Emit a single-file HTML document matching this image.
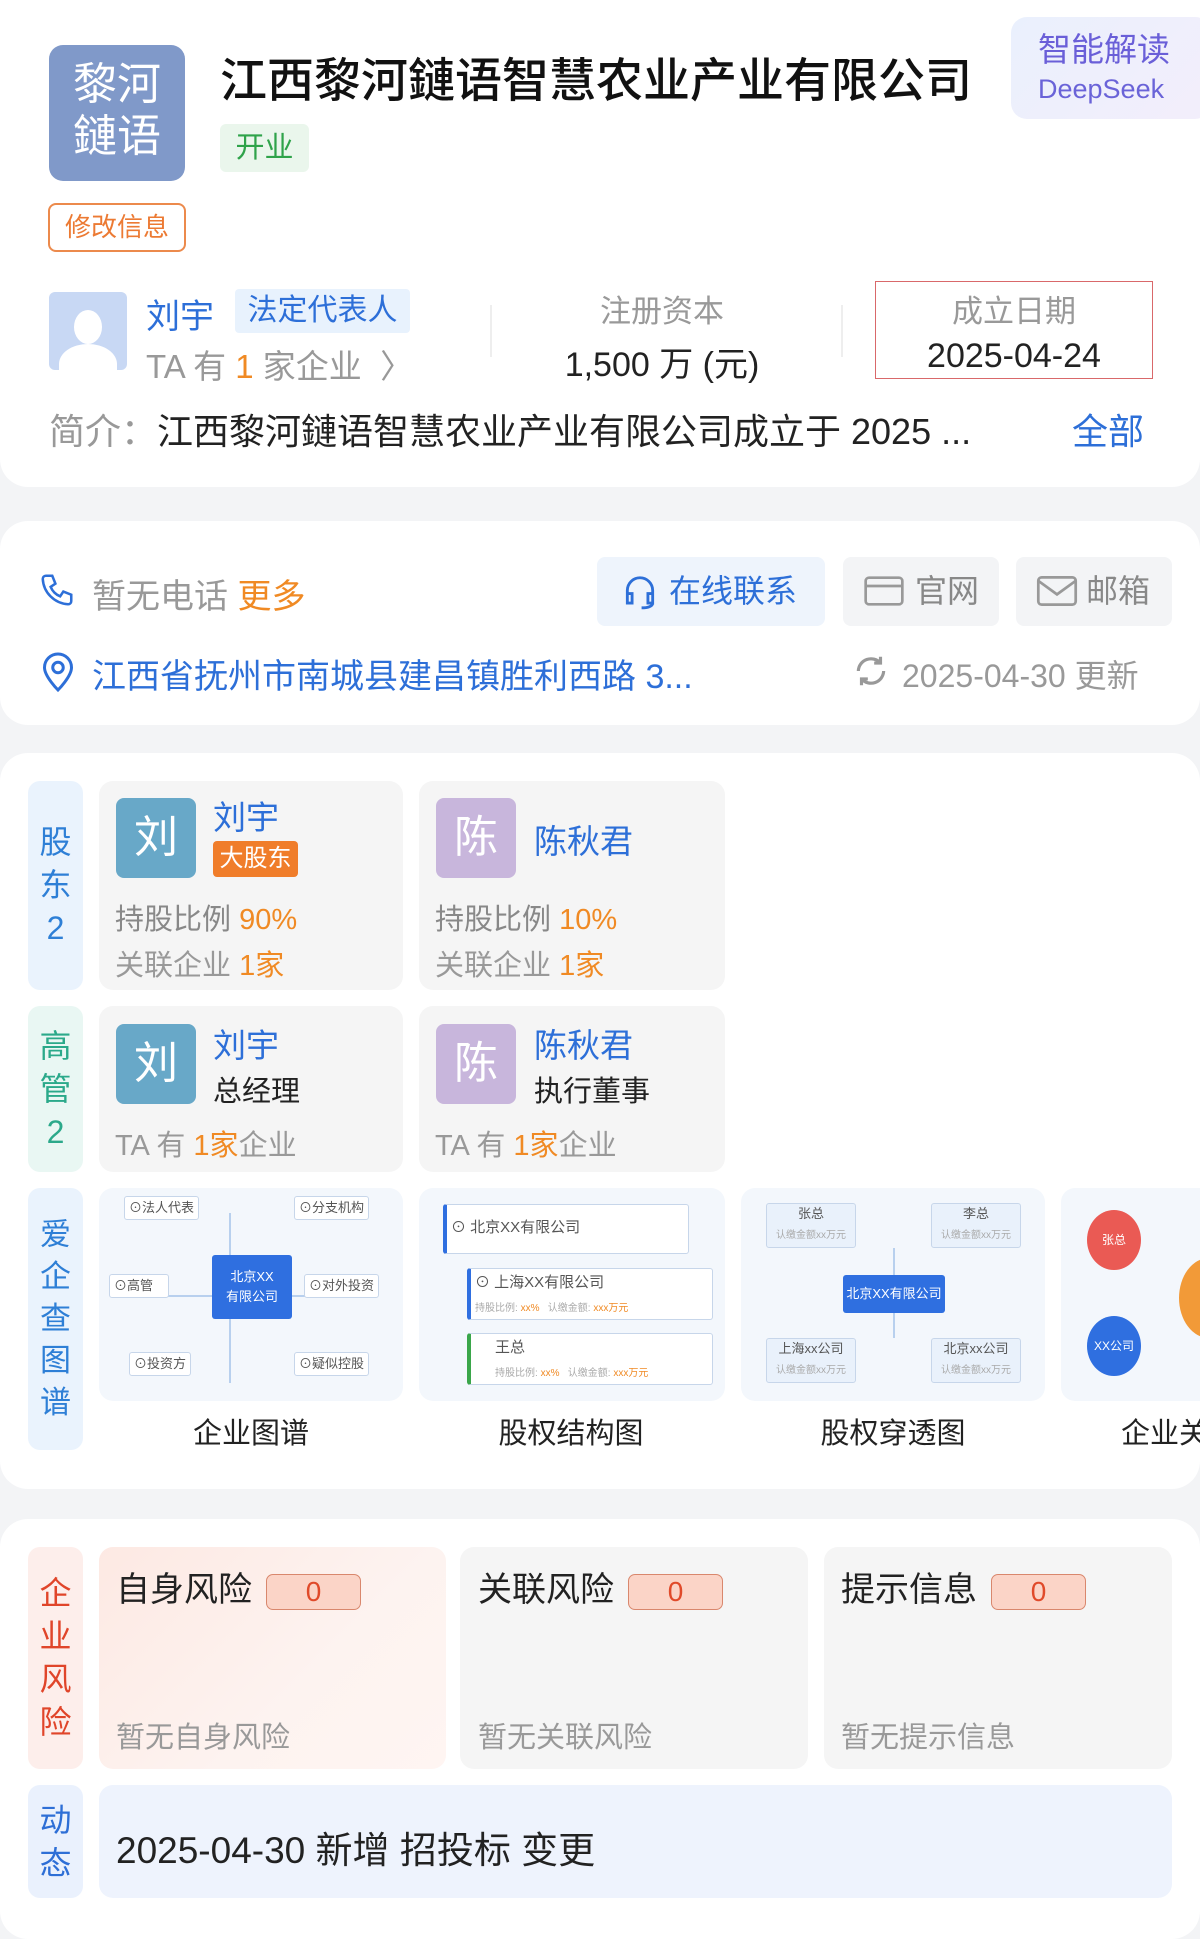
<!DOCTYPE html>
<html><head><meta charset="utf-8"><style>
*{margin:0;padding:0;box-sizing:border-box}
body{width:1200px;height:1911px;background:#f3f4f6;font-family:"Liberation Sans","Noto Sans CJK SC",sans-serif;position:relative;overflow:hidden;color:#222}
.a{position:absolute;white-space:nowrap}
.card{position:absolute;left:0;width:1200px;background:#fff;border-radius:28px}
.gray{color:#999}.blue{color:#2d6fd8}.or{color:#f08a24}
.side{position:absolute;left:28px;width:55px;border-radius:12px;background:#eaf3fd;color:#2e7fd6;font-size:32px;text-align:center;line-height:43px;display:flex;flex-direction:column;justify-content:center}
.box{position:absolute;background:#f5f5f5;border-radius:14px}
.av{position:absolute;width:80px;height:80px;border-radius:8px;color:#fff;font-size:44px;text-align:center;line-height:80px}
.th{position:absolute;top:1188px;height:213px;background:#f3f7fc;border-radius:14px;overflow:hidden}
.n{position:absolute;background:#fff;border:1.5px solid #c7d6ea;border-radius:3px;font-size:13px;color:#555;white-space:nowrap;line-height:22px;padding:0 4px}
.bl{position:absolute;background:#2f6fe0;color:#fff;font-size:13px;text-align:center;border-radius:3px}
.lb{position:absolute;top:1410px;font-size:29px;color:#222;width:304px;text-align:center}
.zero{display:inline-block;width:95px;height:36px;border:1.5px solid #d9876d;background:#fbd4c7;border-radius:7px;color:#e04a2a;font-size:28px;text-align:center;line-height:33px;vertical-align:middle;margin-left:14px}
</style></head><body>

<div class="card" style="top:-30px;height:517px"></div>
<div class="a" style="left:49px;top:45px;width:136px;height:136px;background:#8099c9;border-radius:14px;color:#fff;font-size:44px;line-height:52px;text-align:center;padding-top:14px">黎河<br>鏈语</div>
<div class="a" style="left:220px;top:42px;font-size:47px;font-weight:500;color:#111">江西黎河鏈语智慧农业产业有限公司</div>
<div class="a" style="left:1011px;top:17px;width:200px;height:102px;background:linear-gradient(135deg,#eaf0fd,#f3eefb);border-radius:16px"></div>
<div class="a" style="left:1038px;top:30px;font-size:33px;color:#6a5fd8;line-height:40px">智能解读</div>
<div class="a" style="left:1038px;top:74px;font-size:27px;color:#6a63d8">DeepSeek</div>
<div class="a" style="left:220px;top:124px;width:89px;height:48px;background:#eaf6ec;border-radius:6px;color:#2fa34a;font-size:29px;text-align:center;line-height:48px">开业</div>
<div class="a" style="left:48px;top:203px;width:138px;height:49px;border:2px solid #ec8a4c;border-radius:8px;color:#ec7a33;font-size:26px;text-align:center;line-height:45px">修改信息</div>

<div class="a" style="left:49px;top:292px;width:78px;height:78px;background:#c8d8f4;border-radius:6px;overflow:hidden">
<div style="position:absolute;left:25px;top:18px;width:28px;height:34px;border-radius:50%;background:#fff"></div>
<div style="position:absolute;left:10px;top:52px;width:58px;height:40px;border-radius:50% 50% 0 0;background:#fff"></div></div>
<div class="a blue" style="left:146px;top:289px;font-size:34px">刘宇</div>
<div class="a" style="left:235px;top:289px;width:175px;height:44px;background:#e8f2fd;border-radius:4px;color:#2d6fd8;font-size:30px;text-align:center;line-height:44px">法定代表人</div>
<div class="a gray" style="left:146px;top:340px;font-size:33px">TA 有 <span class="or">1</span> 家企业 &nbsp;〉</div>
<div class="a" style="left:490px;top:305px;width:2px;height:52px;background:#eee"></div>
<div class="a" style="left:841px;top:305px;width:2px;height:52px;background:#eee"></div>
<div class="a gray" style="left:562px;top:286px;width:200px;text-align:center;font-size:31px">注册资本</div>
<div class="a" style="left:542px;top:337px;width:240px;text-align:center;font-size:34px">1,500 万 (元)</div>
<div class="a" style="left:875px;top:281px;width:278px;height:98px;border:1.5px solid #d9686a"></div>
<div class="a gray" style="left:875px;top:286px;width:278px;text-align:center;font-size:31px">成立日期</div>
<div class="a" style="left:875px;top:337px;width:278px;text-align:center;font-size:34px">2025-04-24</div>
<div class="a" style="left:49px;top:403px;font-size:36px"><span class="gray">简介：</span>江西黎河鏈语智慧农业产业有限公司成立于 2025 ...</div>
<div class="a blue" style="left:1072px;top:403px;font-size:36px">全部</div>

<div class="card" style="top:521px;height:204px"></div>
<svg class="a" style="left:38px;top:570px" width="38" height="40" viewBox="0 0 24 24" fill="none" stroke="#2d6fd8" stroke-width="1.6"><path d="M5 3h4l2 5-3 2a11 11 0 0 0 6 6l2-3 5 2v4a2 2 0 0 1-2 2A17 17 0 0 1 3 5a2 2 0 0 1 2-2z"/></svg>
<div class="a gray" style="left:92px;top:569px;font-size:34px">暂无电话 <span class="or">更多</span></div>
<div class="a" style="left:597px;top:557px;width:228px;height:69px;background:#eef4fc;border-radius:8px;color:#2d6fd8;font-size:32px;line-height:69px;padding-left:72px">在线联系</div>
<svg class="a" style="left:620px;top:573px" width="40" height="38" viewBox="0 0 24 24" fill="none" stroke="#2d6fd8" stroke-width="1.8"><path d="M4 14v-3a8 8 0 0 1 16 0v3M4 13h3v6H4zM17 13h3v6h-3zM20 19c0 2-3 3-7 3"/></svg>
<div class="a" style="left:843px;top:557px;width:156px;height:69px;background:#f3f4f6;border-radius:8px;color:#888;font-size:32px;line-height:69px;padding-left:72px">官网</div>
<svg class="a" style="left:864px;top:574px" width="40" height="34" viewBox="0 0 24 20" fill="none" stroke="#999" stroke-width="1.6"><rect x="1" y="2" width="22" height="16" rx="2"/><path d="M1 7h22"/></svg>
<div class="a" style="left:1016px;top:557px;width:156px;height:69px;background:#f3f4f6;border-radius:8px;color:#888;font-size:32px;line-height:69px;padding-left:70px">邮箱</div>
<svg class="a" style="left:1036px;top:574px" width="42" height="34" viewBox="0 0 24 20" fill="none" stroke="#999" stroke-width="1.6"><rect x="1" y="2" width="22" height="16" rx="2"/><path d="M1 4l11 8 11-8"/></svg>
<svg class="a" style="left:40px;top:651px" width="36" height="42" viewBox="0 0 24 28" fill="none" stroke="#2d6fd8" stroke-width="2"><path d="M12 26s9-9 9-15a9 9 0 0 0-18 0c0 6 9 15 9 15z"/><circle cx="12" cy="11" r="3.5"/></svg>
<div class="a blue" style="left:92px;top:649px;font-size:34px">江西省抚州市南城县建昌镇胜利西路 3...</div>
<svg class="a" style="left:852px;top:652px" width="38" height="38" viewBox="0 0 24 24" fill="none" stroke="#999" stroke-width="2"><path d="M20 12a8 8 0 0 1-14 5M4 12a8 8 0 0 1 14-5M18 3v4h-4M6 21v-4h4"/></svg>
<div class="a gray" style="left:902px;top:651px;font-size:32px">2025-04-30 更新</div>

<div class="card" style="top:753px;height:736px"></div>
<div class="side" style="top:781px;height:209px">股<br>东<br>2</div>
<div class="box" style="left:99px;top:781px;width:304px;height:209px"></div>
<div class="av" style="left:116px;top:798px;background:#68a8c8">刘</div>
<div class="a blue" style="left:213px;top:791px;font-size:33px">刘宇</div>
<div class="a" style="left:213px;top:841px;width:85px;height:36px;background:#f07d2a;border-radius:4px;color:#fff;font-size:24px;text-align:center;line-height:36px">大股东</div>
<div class="a gray" style="left:115px;top:896px;font-size:29px;color:#888">持股比例 <span class="or">90%</span></div>
<div class="a" style="left:115px;top:942px;font-size:29px;color:#999">关联企业 <span class="or">1家</span></div>
<div class="box" style="left:419px;top:781px;width:306px;height:209px"></div>
<div class="av" style="left:436px;top:798px;background:#c8b6dc">陈</div>
<div class="a blue" style="left:534px;top:815px;font-size:33px">陈秋君</div>
<div class="a" style="left:435px;top:896px;font-size:29px;color:#888">持股比例 <span class="or">10%</span></div>
<div class="a" style="left:435px;top:942px;font-size:29px;color:#999">关联企业 <span class="or">1家</span></div>

<div class="side" style="top:1006px;height:166px;background:#e9f7f3;color:#2ba98a">高<br>管<br>2</div>
<div class="box" style="left:99px;top:1006px;width:304px;height:166px"></div>
<div class="av" style="left:116px;top:1024px;background:#68a8c8">刘</div>
<div class="a blue" style="left:213px;top:1019px;font-size:33px">刘宇</div>
<div class="a" style="left:213px;top:1068px;font-size:29px;color:#222">总经理</div>
<div class="a" style="left:115px;top:1122px;font-size:29px;color:#999">TA 有 <span class="or">1家</span>企业</div>
<div class="box" style="left:419px;top:1006px;width:306px;height:166px"></div>
<div class="av" style="left:436px;top:1024px;background:#c8b6dc">陈</div>
<div class="a blue" style="left:534px;top:1019px;font-size:33px">陈秋君</div>
<div class="a" style="left:534px;top:1068px;font-size:29px;color:#222">执行董事</div>
<div class="a" style="left:435px;top:1122px;font-size:29px;color:#999">TA 有 <span class="or">1家</span>企业</div>

<div class="side" style="top:1188px;height:262px;font-size:31px;line-height:42px">爱<br>企<br>查<br>图<br>谱</div>
<div class="th" style="left:99px;width:304px">
<div class="a" style="left:130px;top:25px;width:2px;height:170px;background:#b8d0ee"></div>
<div class="a" style="left:30px;top:107px;width:240px;height:2px;background:#b8d0ee"></div>
<div class="n" style="left:25px;top:8px">⊙法人代表</div><div class="n" style="left:195px;top:8px">⊙分支机构</div>
<div class="n" style="left:10px;top:86px;width:60px">⊙高管</div><div class="n" style="left:205px;top:86px">⊙对外投资</div>
<div class="n" style="left:30px;top:164px">⊙投资方</div><div class="n" style="left:195px;top:164px">⊙疑似控股</div>
<div class="bl" style="left:113px;top:67px;width:42px;height:64px;width:80px;line-height:20px;padding-top:12px">北京XX<br>有限公司</div></div>
<div class="th" style="left:419px;width:306px">
<div class="n" style="left:24px;top:16px;width:246px;height:50px;line-height:46px;border-left:4px solid #2f6fe0;font-size:15px">⊙ 北京XX有限公司</div>
<div class="n" style="left:48px;top:80px;width:246px;height:52px;border-left:4px solid #2f6fe0;font-size:15px;line-height:24px;padding-top:2px">⊙ 上海XX有限公司<br><span style="font-size:10px;color:#aaa">持股比例: <span class="or">xx%</span> &nbsp; 认缴金额: <span class="or">xxx万元</span></span></div>
<div class="n" style="left:48px;top:145px;width:246px;height:52px;border-left:4px solid #3aa64a;font-size:15px;line-height:24px;padding:2px 0 0 24px">王总<br><span style="font-size:10px;color:#aaa">持股比例: <span class="or">xx%</span> &nbsp; 认缴金额: <span class="or">xxx万元</span></span></div></div>
<div class="th" style="left:741px;width:304px">
<div class="n" style="left:25px;top:15px;width:90px;height:45px;text-align:center;line-height:20px;background:#e9f1fb">张总<br><span style="font-size:10px;color:#aaa">认缴金额xx万元</span></div>
<div class="n" style="left:190px;top:15px;width:90px;height:45px;text-align:center;line-height:20px;background:#e9f1fb">李总<br><span style="font-size:10px;color:#aaa">认缴金额xx万元</span></div>
<div class="a" style="left:152px;top:60px;width:2px;height:90px;background:#b8d0ee"></div>
<div class="bl" style="left:102px;top:87px;width:102px;height:38px;line-height:38px">北京XX有限公司</div>
<div class="n" style="left:25px;top:150px;width:90px;height:45px;text-align:center;line-height:20px;background:#e9f1fb">上海xx公司<br><span style="font-size:10px;color:#aaa">认缴金额xx万元</span></div>
<div class="n" style="left:190px;top:150px;width:90px;height:45px;text-align:center;line-height:20px;background:#e9f1fb">北京xx公司<br><span style="font-size:10px;color:#aaa">认缴金额xx万元</span></div></div>
<div class="th" style="left:1061px;width:160px">
<div class="a" style="left:26px;top:22px;width:54px;height:60px;border-radius:50%;background:#ea5a54;color:#fff;font-size:12px;text-align:center;line-height:60px">张总</div>
<div class="a" style="left:26px;top:128px;width:54px;height:60px;border-radius:50%;background:#2f6fe0;color:#fff;font-size:12px;text-align:center;line-height:60px">XX公司</div>
<div class="a" style="left:118px;top:70px;width:60px;height:80px;border-radius:50%;background:#f29a38"></div></div>
<div class="lb" style="left:99px">企业图谱</div>
<div class="lb" style="left:419px">股权结构图</div>
<div class="lb" style="left:741px">股权穿透图</div>
<div class="lb" style="left:1061px;width:200px;text-align:left;padding-left:60px">企业关</div>

<div class="card" style="top:1519px;height:420px"></div>
<div class="side" style="top:1547px;height:222px;background:#fdeeeb;color:#e0452a">企<br>业<br>风<br>险</div>
<div class="box" style="left:99px;top:1547px;width:347px;height:222px;background:linear-gradient(135deg,#fde9e3,#fdf3f0 60%,#fff5f2)"></div>
<div class="box" style="left:460px;top:1547px;width:348px;height:222px"></div>
<div class="box" style="left:824px;top:1547px;width:348px;height:222px"></div>
<div class="a" style="left:116px;top:1562px;font-size:34px">自身风险<span class="zero">0</span></div>
<div class="a" style="left:478px;top:1562px;font-size:34px">关联风险<span class="zero">0</span></div>
<div class="a" style="left:841px;top:1562px;font-size:34px">提示信息<span class="zero">0</span></div>
<div class="a" style="left:116px;top:1714px;font-size:29px;color:#999">暂无自身风险</div>
<div class="a" style="left:478px;top:1714px;font-size:29px;color:#999">暂无关联风险</div>
<div class="a" style="left:841px;top:1714px;font-size:29px;color:#999">暂无提示信息</div>
<div class="side" style="top:1785px;height:113px;background:#eaf1fd;color:#2e6fd6">动<br>态</div>
<div class="box" style="left:99px;top:1785px;width:1073px;height:113px;background:#eef3fd"></div>
<div class="a" style="left:116px;top:1820px;font-size:37px">2025-04-30 新增 招投标 变更</div>
</body></html>
